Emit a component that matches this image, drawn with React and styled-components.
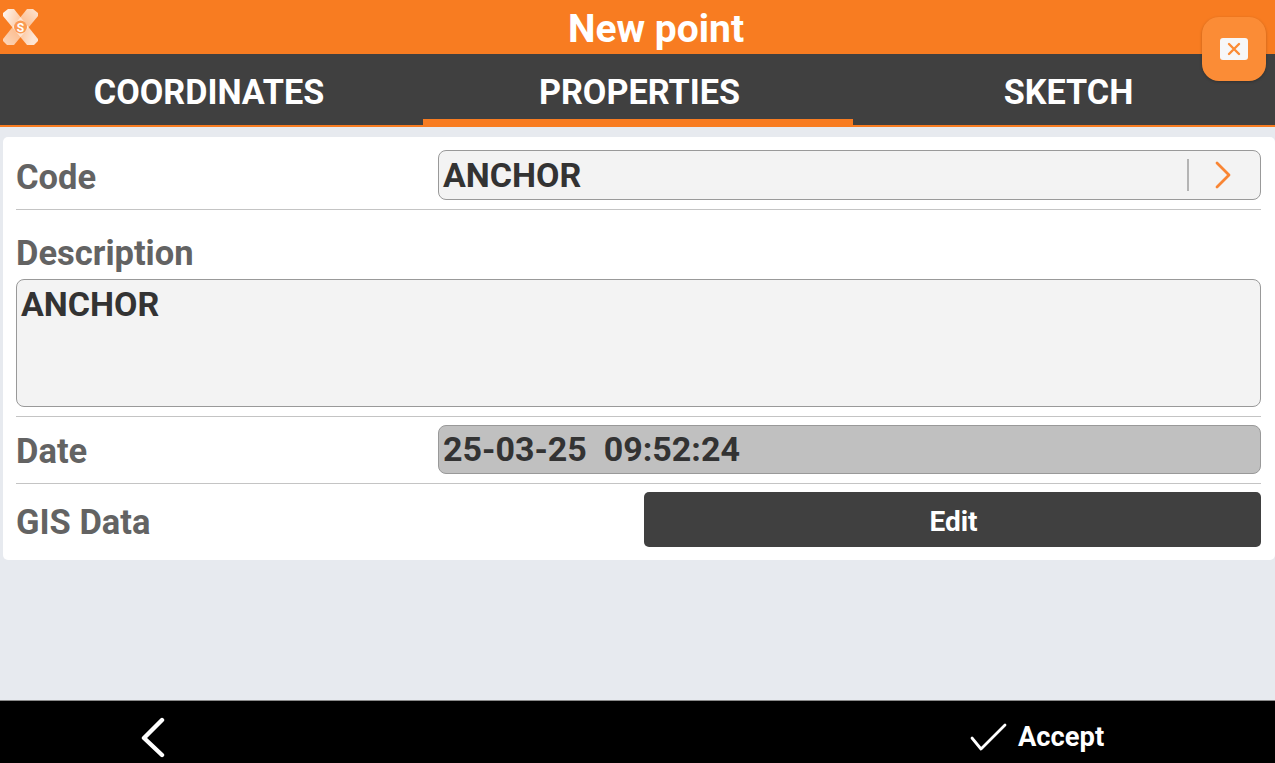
import React from "react";
import styled, { createGlobalStyle } from "styled-components";

const Global = createGlobalStyle`
  html, body { margin: 0; padding: 0; background: #e7eaef; }
  * { box-sizing: border-box; }
`;

const Page = styled.div`
  position: relative;
  width: 1275px;
  height: 763px;
  overflow: hidden;
  display: flex;
  flex-direction: column;
  background: #e7eaef;
  font-family: Roboto, "Liberation Sans", sans-serif;
`;

const Header = styled.header`
  height: 54px;
  flex: none;
  background: #f87c21;
  display: flex;
  align-items: center;
  justify-content: center;
  position: relative;
  padding-left: 37px;
`;

const Title = styled.h1`
  margin: 0;
  font-size: 39px;
  font-weight: 700;
  color: #fff;
  line-height: 54px;
  padding-top: 4px;
`;

const LogoWrap = styled.div`
  position: absolute;
  left: 3px;
  top: 9px;
  width: 35px;
  height: 36px;
`;

const CloseButton = styled.button`
  position: absolute;
  left: 1202px;
  top: 17px;
  width: 64px;
  height: 64px;
  border: 0;
  padding: 0;
  border-radius: 17px;
  background: #fb8c36;
  box-shadow: 0 1px 3px rgba(0, 0, 0, 0.25);
  display: flex;
  align-items: center;
  justify-content: center;
  z-index: 2;
`;

const Tabs = styled.nav`
  height: 73px;
  flex: none;
  display: grid;
  grid-template-columns: 423px 430px 1fr;
  background: #404040;
  border-bottom: 2px solid #f87c21;
`;

const Tab = styled.div`
  display: flex;
  align-items: center;
  justify-content: center;
  color: #fff;
  font-size: 34.2px;
  font-weight: 700;
  height: 71px;
  padding-top: 11px;
  padding-left: ${(p) => p.$left || 0}px;
  padding-right: ${(p) => p.$right || 0}px;
  border-bottom: ${(p) => (p.$active ? "6px solid #f87c21" : "0")};
  padding-bottom: ${(p) => (p.$active ? "0" : "6px")};
`;

const Body = styled.main`
  flex: 1;
  padding: 10px 0 0 3px;
`;

const Card = styled.section`
  background: #fff;
  border-radius: 5px;
  height: 423px;
  padding: 0 14px 0 13px;
  display: flex;
  flex-direction: column;
`;

const Row = styled.div`
  display: grid;
  grid-template-columns: ${(p) => p.$columns || "422px 1fr"};
  align-items: center;
  height: ${(p) => p.$height}px;
  padding-top: ${(p) => p.$top || 0}px;
  padding-bottom: ${(p) => p.$bottom || 0}px;
  border-bottom: ${(p) => (p.$line ? "1px solid #c4c4c4" : "0")};
`;

const Label = styled.span`
  font-size: 34.5px;
  font-weight: 700;
  color: #636363;
  line-height: 40px;
  padding-top: ${(p) => p.$nudge || 0}px;
`;

const Field = styled.div`
  height: ${(p) => p.$height}px;
  border: 1px solid #999;
  border-radius: 8px;
  background: ${(p) => (p.$disabled ? "#c0c0c0" : "#f3f3f3")};
  color: #333;
  font-size: 34px;
  font-weight: 700;
  padding-left: 4px;
  display: flex;
  align-items: center;
  white-space: pre;
  justify-content: space-between;
`;

const FieldActions = styled.div`
  display: flex;
  align-items: center;
  height: 100%;
  padding-right: 29px;
`;

const Separator = styled.span`
  width: 2px;
  height: 32px;
  background: #b4b4b4;
  margin-right: 26px;
`;

const DescriptionBlock = styled.div`
  height: 207px;
  padding-top: 23px;
  border-bottom: 1px solid #c4c4c4;
  display: flex;
  flex-direction: column;
`;

const DescriptionLabel = styled(Label)`
  display: block;
  height: 46px;
  line-height: 40px;
`;

const TextArea = styled.div`
  height: 128px;
  border: 1px solid #999;
  border-radius: 8px;
  background: #f3f3f3;
  color: #333;
  font-size: 34px;
  font-weight: 700;
  padding: 4px 4px;
  line-height: 40px;
`;

const EditButton = styled.button`
  height: 55px;
  border: 0;
  border-radius: 5px;
  background: #404040;
  color: #fff;
  font-family: inherit;
  font-size: 28px;
  font-weight: 700;
  padding: 3px 0 0 2px;
`;

const Footer = styled.footer`
  height: 63px;
  flex: none;
  background: #000;
  border-top: 1px solid #8a8a8a;
  display: grid;
  grid-template-columns: 638px 1fr;
  color: #fff;
`;

const FooterLeft = styled.div`
  display: flex;
  align-items: center;
  padding: 12px 0 0 140px;
`;

const FooterRight = styled.div`
  display: flex;
  align-items: center;
  padding: 10px 0 0 332px;
  gap: 11px;
  font-size: 27.3px;
  font-weight: 700;
`;

const Logo = () => (
  <svg width="35" height="36" viewBox="0 0 35 36">
    <defs>
      <linearGradient id="armA" x1="0" y1="0" x2="1" y2="0.3">
        <stop offset="0" stopColor="#fff" stopOpacity="0.95" />
        <stop offset="0.6" stopColor="#fff" stopOpacity="0.55" />
        <stop offset="1" stopColor="#fff" stopOpacity="0.8" />
      </linearGradient>
      <linearGradient id="armB" x1="1" y1="0" x2="0" y2="1">
        <stop offset="0" stopColor="#fff" stopOpacity="0.8" />
        <stop offset="0.5" stopColor="#fff" stopOpacity="0.45" />
        <stop offset="1" stopColor="#fff" stopOpacity="0.7" />
      </linearGradient>
    </defs>
    <path d="M0 7 L0 4 L5 0 L11 0 L35 30 L35 32 L31 36 L24 36 Z" fill="url(#armA)" />
    <path d="M24 0 L30 0 L35 4 L35 7 L11 36 L4 36 L0 32 L0 30 Z" fill="url(#armB)" />
    <circle cx="17.5" cy="18" r="6.5" fill="#fa9a53" />
    <text x="17.5" y="22.5" fontSize="12" fontWeight="700" fill="#fff" textAnchor="middle" fontFamily="Roboto, sans-serif">S</text>
  </svg>
);

const CloseIcon = () => (
  <svg width="28" height="22" viewBox="0 0 28 22">
    <rect width="28" height="22" rx="3" fill="#f7f7f8" />
    <path d="M9 6 L19 16 M19 6 L9 16" stroke="#fb8c36" strokeWidth="2.4" strokeLinecap="round" />
  </svg>
);

const ChevronRight = () => (
  <svg width="16" height="28" viewBox="0 0 16 28" fill="none">
    <path d="M2 2 L14 14 L2 26" stroke="#f98533" strokeWidth="2.8" strokeLinecap="round" strokeLinejoin="round" />
  </svg>
);

const BackIcon = () => (
  <svg width="26" height="42" viewBox="0 0 26 42" fill="none">
    <path d="M22 3 L4 21 L22 38" stroke="#fff" strokeWidth="4.4" strokeLinecap="round" strokeLinejoin="round" />
  </svg>
);

const CheckIcon = () => (
  <svg width="37" height="28" viewBox="0 0 37 28" fill="none">
    <path d="M2 15 L11 26 L35 2" stroke="#fff" strokeWidth="2.8" strokeLinecap="round" strokeLinejoin="round" />
  </svg>
);

export default function App() {
  return (
    <Page>
      <Global />
      <Header>
        <LogoWrap><Logo /></LogoWrap>
        <Title>New point</Title>
      </Header>
      <CloseButton aria-label="Close"><CloseIcon /></CloseButton>
      <Tabs>
        <Tab $right={5}>COORDINATES</Tab>
        <Tab $active $left={3}>PROPERTIES</Tab>
        <Tab $left={9}>SKETCH</Tab>
      </Tabs>
      <Body>
        <Card>
          <Row $height={73} $top={4} $line>
            <Label $nudge={3}>Code</Label>
            <Field $height={50}>
              ANCHOR
              <FieldActions>
                <Separator />
                <ChevronRight />
              </FieldActions>
            </Field>
          </Row>
          <DescriptionBlock>
            <DescriptionLabel>Description</DescriptionLabel>
            <TextArea>ANCHOR</TextArea>
          </DescriptionBlock>
          <Row $height={67} $bottom={2} $line>
            <Label $nudge={4}>Date</Label>
            <Field $height={49} $disabled>25-03-25  09:52:24</Field>
          </Row>
          <Row $height={76} $bottom={5} $columns="628px 1fr">
            <Label $nudge={5}>GIS Data</Label>
            <EditButton>Edit</EditButton>
          </Row>
        </Card>
      </Body>
      <Footer>
        <FooterLeft><BackIcon /></FooterLeft>
        <FooterRight><CheckIcon />Accept</FooterRight>
      </Footer>
    </Page>
  );
}
